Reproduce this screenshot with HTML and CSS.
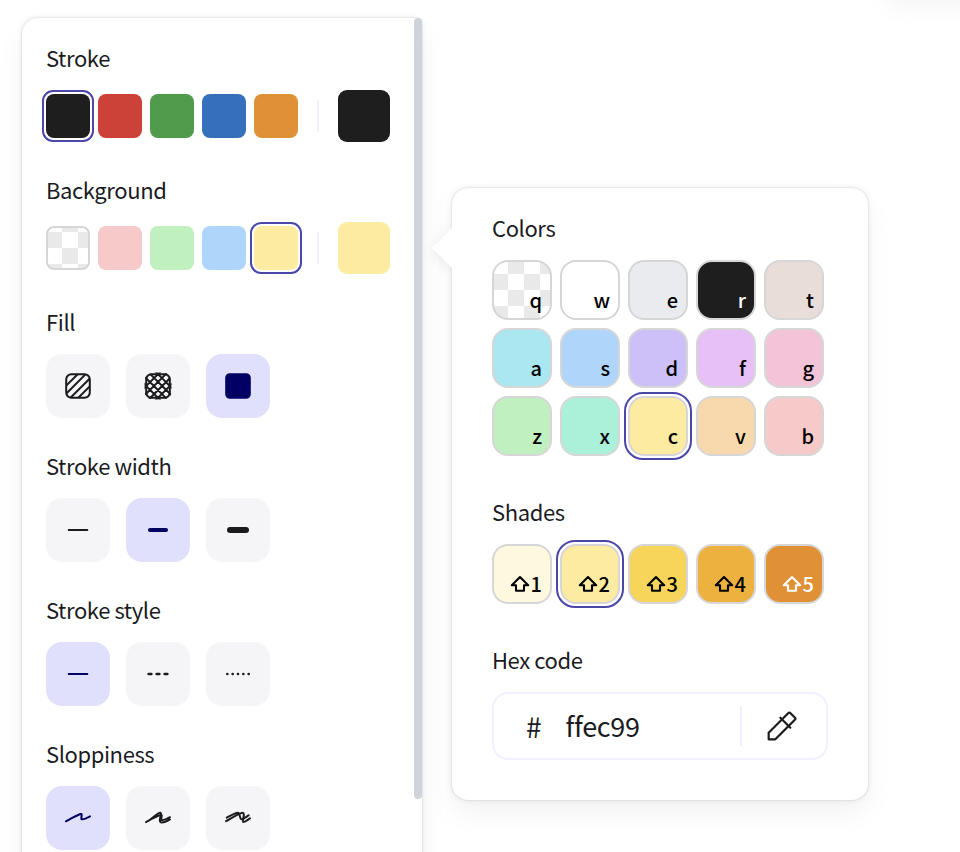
FILE: index.html
```html
<!DOCTYPE html>
<html lang="en">
<head>
<meta charset="utf-8">
<title>Shape properties</title>
<link rel="stylesheet" href="styles.css">
</head>
<body>
<div class="corner-island"></div>
<main class="workspace">
  <aside class="panel">
    <section>
      <h3>Stroke</h3>
      <div class="swatches">
        <button class="swatch black selected"></button>
        <button class="swatch red"></button>
        <button class="swatch green"></button>
        <button class="swatch blue"></button>
        <button class="swatch orange"></button>
        <span class="divider"></span>
        <button class="swatch current black"></button>
      </div>
    </section>
    <section>
      <h3>Background</h3>
      <div class="swatches">
        <button class="swatch transparent"></button>
        <button class="swatch c-b"></button>
        <button class="swatch c-z"></button>
        <button class="swatch c-s"></button>
        <button class="swatch c-c selected"></button>
        <span class="divider"></span>
        <button class="swatch current c-c"></button>
      </div>
    </section>
    <section>
      <h3>Fill</h3>
      <div class="options">
        <button class="option"><svg viewBox="0 0 20 20" stroke-width="1.25">
          <clipPath id="box"><path d="M5.879 2.625h8.242a3.254 3.254 0 0 1 3.254 3.254v8.242a3.254 3.254 0 0 1-3.254 3.254H5.88a3.254 3.254 0 0 1-3.254-3.254V5.88a3.254 3.254 0 0 1 3.254-3.254Z"/></clipPath>
          <path d="M5.879 2.625h8.242a3.254 3.254 0 0 1 3.254 3.254v8.242a3.254 3.254 0 0 1-3.254 3.254H5.88a3.254 3.254 0 0 1-3.254-3.254V5.88a3.254 3.254 0 0 1 3.254-3.254Z"/>
          <path clip-path="url(#box)" d="M2.258 15.156 15.156 2.258M7.324 20.222 20.222 7.325m-20.444 5.35L12.675-.222m-8.157 18.34L17.416 5.22"/></svg></button>
        <button class="option"><svg viewBox="0 0 20 20" stroke-width="1.25">
          <clipPath id="round"><rect x="1.55" y="1.55" width="16.9" height="16.9" rx="4.6"/></clipPath>
          <path d="M5.879 2.625h8.242a3.254 3.254 0 0 1 3.254 3.254v8.242a3.254 3.254 0 0 1-3.254 3.254H5.88a3.254 3.254 0 0 1-3.254-3.254V5.88a3.254 3.254 0 0 1 3.254-3.254Z"/>
          <path clip-path="url(#round)" d="M2.426 15.044 15.044 2.426M7.383 20 20 7.383M0 12.617 12.617 0m-7.98 17.941L17.256 5.324m-2.211 12.25L2.426 4.956M20 12.617 7.383 0m5.234 20L0 7.383m17.941 7.98L5.324 2.745"/></svg></button>
        <button class="option active"><svg viewBox="0 0 20 20" stroke-width="1.25"><path fill="currentColor" d="M4.91 2.625h10.18a2.284 2.284 0 0 1 2.285 2.284v10.182a2.284 2.284 0 0 1-2.284 2.284H4.909a2.284 2.284 0 0 1-2.284-2.284V4.909a2.284 2.284 0 0 1 2.284-2.284Z"/></svg></button>
      </div>
    </section>
    <section>
      <h3>Stroke width</h3>
      <div class="options">
        <button class="option"><svg viewBox="0 0 20 20" stroke-width="1.25"><path d="M4.167 10h11.666"/></svg></button>
        <button class="option active"><svg viewBox="0 0 20 20" stroke-width="2.5"><path d="M5 10h10"/></svg></button>
        <button class="option"><svg viewBox="0 0 20 20" stroke-width="3.75"><path d="M5 10h10"/></svg></button>
      </div>
    </section>
    <section>
      <h3>Stroke style</h3>
      <div class="options">
        <button class="option active"><svg viewBox="0 0 20 20" stroke-width="1.25"><path d="M4.167 10h11.666"/></svg></button>
        <button class="option"><svg viewBox="0 0 24 24" stroke-width="2"><path d="M5 12h2M11 12h2M17 12h2"/></svg></button>
        <button class="option"><svg viewBox="0 0 24 24" stroke-width="2"><path d="M4 12v.01M8 12v.01M12 12v.01M16 12v.01M20 12v.01"/></svg></button>
      </div>
    </section>
    <section>
      <h3>Sloppiness</h3>
      <div class="options">
        <button class="option active"><svg viewBox="0 0 20 20" stroke-width="1.25"><path d="M2.5 12.038c1.655-.885 5.9-3.292 8.568-4.354 2.668-1.063.101 2.821 1.32 3.104 1.218.283 5.112-1.814 5.112-1.814"/></svg></button>
        <button class="option"><svg viewBox="0 0 20 20" stroke-width="1.25"><path d="M2.5 12.563c1.655-.886 5.9-3.293 8.568-4.355 2.668-1.062.101 2.822 1.32 3.105 1.218.283 5.112-1.814 5.112-1.814m-13.469 2.23c2.963-1.586 6.13-5.62 7.468-4.998 1.338.623-1.153 4.11-.132 5.595 1.02 1.487 6.133-1.43 6.133-1.43"/></svg></button>
        <button class="option"><svg viewBox="0 0 20 20" stroke-width="1.25"><path d="M2.5 11.936c1.737-.879 8.627-5.346 10.42-5.268 1.795.078-.418 5.138.345 5.736.763.598 3.53-1.789 4.235-2.147M2.929 9.788c1.164-.519 5.47-3.28 6.987-3.114 1.519.165 1 3.827 2.121 4.109 1.122.281 3.839-2.016 4.606-2.42"/></svg></button>
      </div>
    </section>
    <div class="scrollbar"></div>
  </aside>

  <div class="popover">
    <svg class="arrow" viewBox="0 0 21 40"><path d="M21 0h-1L0 20l20 20h1Z"/></svg>
    <section>
      <h3>Colors</h3>
      <div class="cells">
        <button class="cell transparent">q</button>
        <button class="cell c-w">w</button>
        <button class="cell c-e">e</button>
        <button class="cell black light">r</button>
        <button class="cell c-t">t</button>
        <button class="cell c-a">a</button>
        <button class="cell c-s">s</button>
        <button class="cell c-d">d</button>
        <button class="cell c-f">f</button>
        <button class="cell c-g">g</button>
        <button class="cell c-z">z</button>
        <button class="cell c-x">x</button>
        <button class="cell c-c selected">c</button>
        <button class="cell c-v">v</button>
        <button class="cell c-b">b</button>
      </div>
    </section>
    <section>
      <h3>Shades</h3>
      <div class="cells">
        <button class="cell shade-1"><svg class="shift" viewBox="0 0 20 18"><path d="M10 2 1.8 10.300H6v5.500h8v-5.500h4.200Z"/></svg>1</button>
        <button class="cell c-c selected"><svg class="shift" viewBox="0 0 20 18"><path d="M10 2 1.8 10.300H6v5.500h8v-5.500h4.200Z"/></svg>2</button>
        <button class="cell shade-3"><svg class="shift" viewBox="0 0 20 18"><path d="M10 2 1.8 10.300H6v5.500h8v-5.500h4.200Z"/></svg>3</button>
        <button class="cell shade-4"><svg class="shift" viewBox="0 0 20 18"><path d="M10 2 1.8 10.300H6v5.500h8v-5.500h4.200Z"/></svg>4</button>
        <button class="cell orange light"><svg class="shift" viewBox="0 0 20 18"><path d="M10 2 1.8 10.300H6v5.500h8v-5.500h4.200Z"/></svg>5</button>
      </div>
    </section>
    <section>
      <h3>Hex code</h3>
      <div class="hex">
        <span class="hash">#</span>
        <span class="value">ffec99</span>
        <span class="hex-divider"></span>
        <svg class="picker" viewBox="0 0 24 24" stroke-width="1.3"><path d="m11 7 6 6M4 16 15.7 4.3a1 1 0 0 1 1.4 0l2.6 2.6a1 1 0 0 1 0 1.4L8 20H4v-4z"/></svg>
      </div>
    </section>
  </div>
</main>
</body>
</html>
```
FILE: styles.css
```css
* { box-sizing: border-box; }

body {
  margin: 0;
  height: 852px;
  overflow: hidden;
  background: #fff;
  color: #1b1b1f;
  font-family: "Noto Sans CJK SC", "Noto Sans", sans-serif;
}

button {
  border: 0;
  padding: 0;
  font: inherit;
  color: inherit;
}

svg {
  display: block;
  fill: none;
  stroke: currentColor;
  stroke-linecap: round;
  stroke-linejoin: round;
}

.workspace {
  display: flex;
  align-items: flex-start;
  gap: 30px;
  height: 852px;
  padding: 18px 0 0 22px;
  overflow: hidden;
}

.panel, .popover, .corner-island {
  background: #fff;
  box-shadow: 0 0 2px rgba(0, 0, 0, .17), 0 0 6px rgba(0, 0, 0, .08), 0 14px 28px rgba(0, 0, 0, .05);
}

.corner-island {
  position: absolute;
  top: -80px;
  left: 884px;
  width: 120px;
  height: 71px;
  border-radius: 16px;
}

.panel {
  position: relative;
  display: flex;
  flex: none;
  flex-direction: column;
  gap: 33px;
  width: 400px;
  height: 900px;
  padding: 25px 24px;
  border-radius: 16px 8px 16px 16px;
}

.scrollbar {
  position: absolute;
  top: 0;
  right: 0;
  width: 8px;
  height: 781px;
  border-radius: 4px;
  background: #ced4d9;
}

h3 {
  margin: 0 0 19px;
  font-size: 22px;
  font-weight: 400;
  line-height: 28px;
  letter-spacing: -.4px;
}

.swatches {
  display: flex;
  align-items: center;
  gap: 8px;
  height: 52px;
}

.swatch {
  position: relative;
  width: 44px;
  height: 44px;
  border-radius: 8px;
}

.swatch.current {
  width: 52px;
  height: 52px;
  border-radius: 9px;
}

.divider {
  width: 2px;
  height: 32px;
  margin: 0 11px;
  background: #f1f0ff;
}

.selected::after {
  content: "";
  position: absolute;
  inset: -4px;
  border: 2px solid #4a47a9;
  border-radius: 11px;
}

.options {
  display: flex;
  gap: 16px;
}

.option {
  display: grid;
  place-items: center;
  width: 64px;
  height: 64px;
  border-radius: 16px;
  background: #f5f5f8;
}

.option svg {
  width: 32px;
  height: 32px;
}

.option.active {
  background: #e0dffc;
  color: #030064;
}

.popover {
  position: relative;
  display: flex;
  flex: none;
  flex-direction: column;
  gap: 41px;
  width: 416px;
  height: 612px;
  margin-top: 170px;
  padding: 25px 40px 40px;
  border-radius: 16px;
}

.arrow {
  position: absolute;
  top: 40px;
  left: -20px;
  width: 21px;
  height: 40px;
  fill: #fff;
  stroke: none;
  filter: drop-shadow(0 3px 6px rgba(0, 0, 0, .08));
  clip-path: inset(-20px 1px -20px -20px);
}

.cells {
  display: grid;
  grid-template-columns: repeat(5, 60px);
  gap: 8px;
}

.cell {
  position: relative;
  display: flex;
  align-items: flex-end;
  justify-content: flex-end;
  height: 60px;
  padding: 0 8px 4px 0;
  border: 2px solid #d6d6d6;
  border-radius: 16px;
  color: #000;
  font-size: 20px;
  font-weight: 500;
  line-height: 28px;
}

.cell.selected::after {
  inset: -6px;
  border-radius: 19px;
}

.cell.light { color: #fff; }

.shift {
  width: 20px;
  height: 18px;
  margin: 0 1px 5px 0;
  stroke-width: 2.1;
}

.transparent {
  border: 2px solid #d6d6d6;
  background: repeating-conic-gradient(#e9e9e9 0 25%, #fff 0 50%) -2px -12px / 32px 32px;
}

.cell.transparent { background-position: -2px -4px; }

.black { background-color: #1e1e1e; }
.red { background-color: #cd4238; }
.green { background-color: #519b4d; }
.blue { background-color: #366fbc; }
.orange { background-color: #e09135; }
.c-w { background-color: #fff; }
.c-e { background-color: #eaebef; }
.c-t { background-color: #e8ddd9; }
.c-a { background-color: #abe7f1; }
.c-s { background-color: #b0d5fb; }
.c-d { background-color: #cdc0f9; }
.c-f { background-color: #e6c0f7; }
.c-g { background-color: #f3c4d7; }
.c-z { background-color: #c0f0c0; }
.c-x { background-color: #abf0d9; }
.c-c { background-color: #fceba0; }
.c-v { background-color: #f8d9ae; }
.c-b { background-color: #f7caca; }
.shade-1 { background-color: #fef8df; }
.shade-3 { background-color: #f7d55a; }
.shade-4 { background-color: #edb140; }

.hex {
  display: flex;
  align-items: center;
  height: 68px;
  padding: 0 24px 0 32px;
  border: 2px solid #f1f0ff;
  border-radius: 16px;
  font-size: 28px;
  line-height: 40px;
}

.value {
  flex: 1;
  margin-left: 24px;
  font-size: 27px;
  letter-spacing: -.3px;
  font-variant-ligatures: none;
}

.hex-divider {
  width: 2px;
  height: 40px;
  background: #f1f0ff;
}

.picker {
  width: 40px;
  height: 40px;
  margin-left: 20px;
}
```
